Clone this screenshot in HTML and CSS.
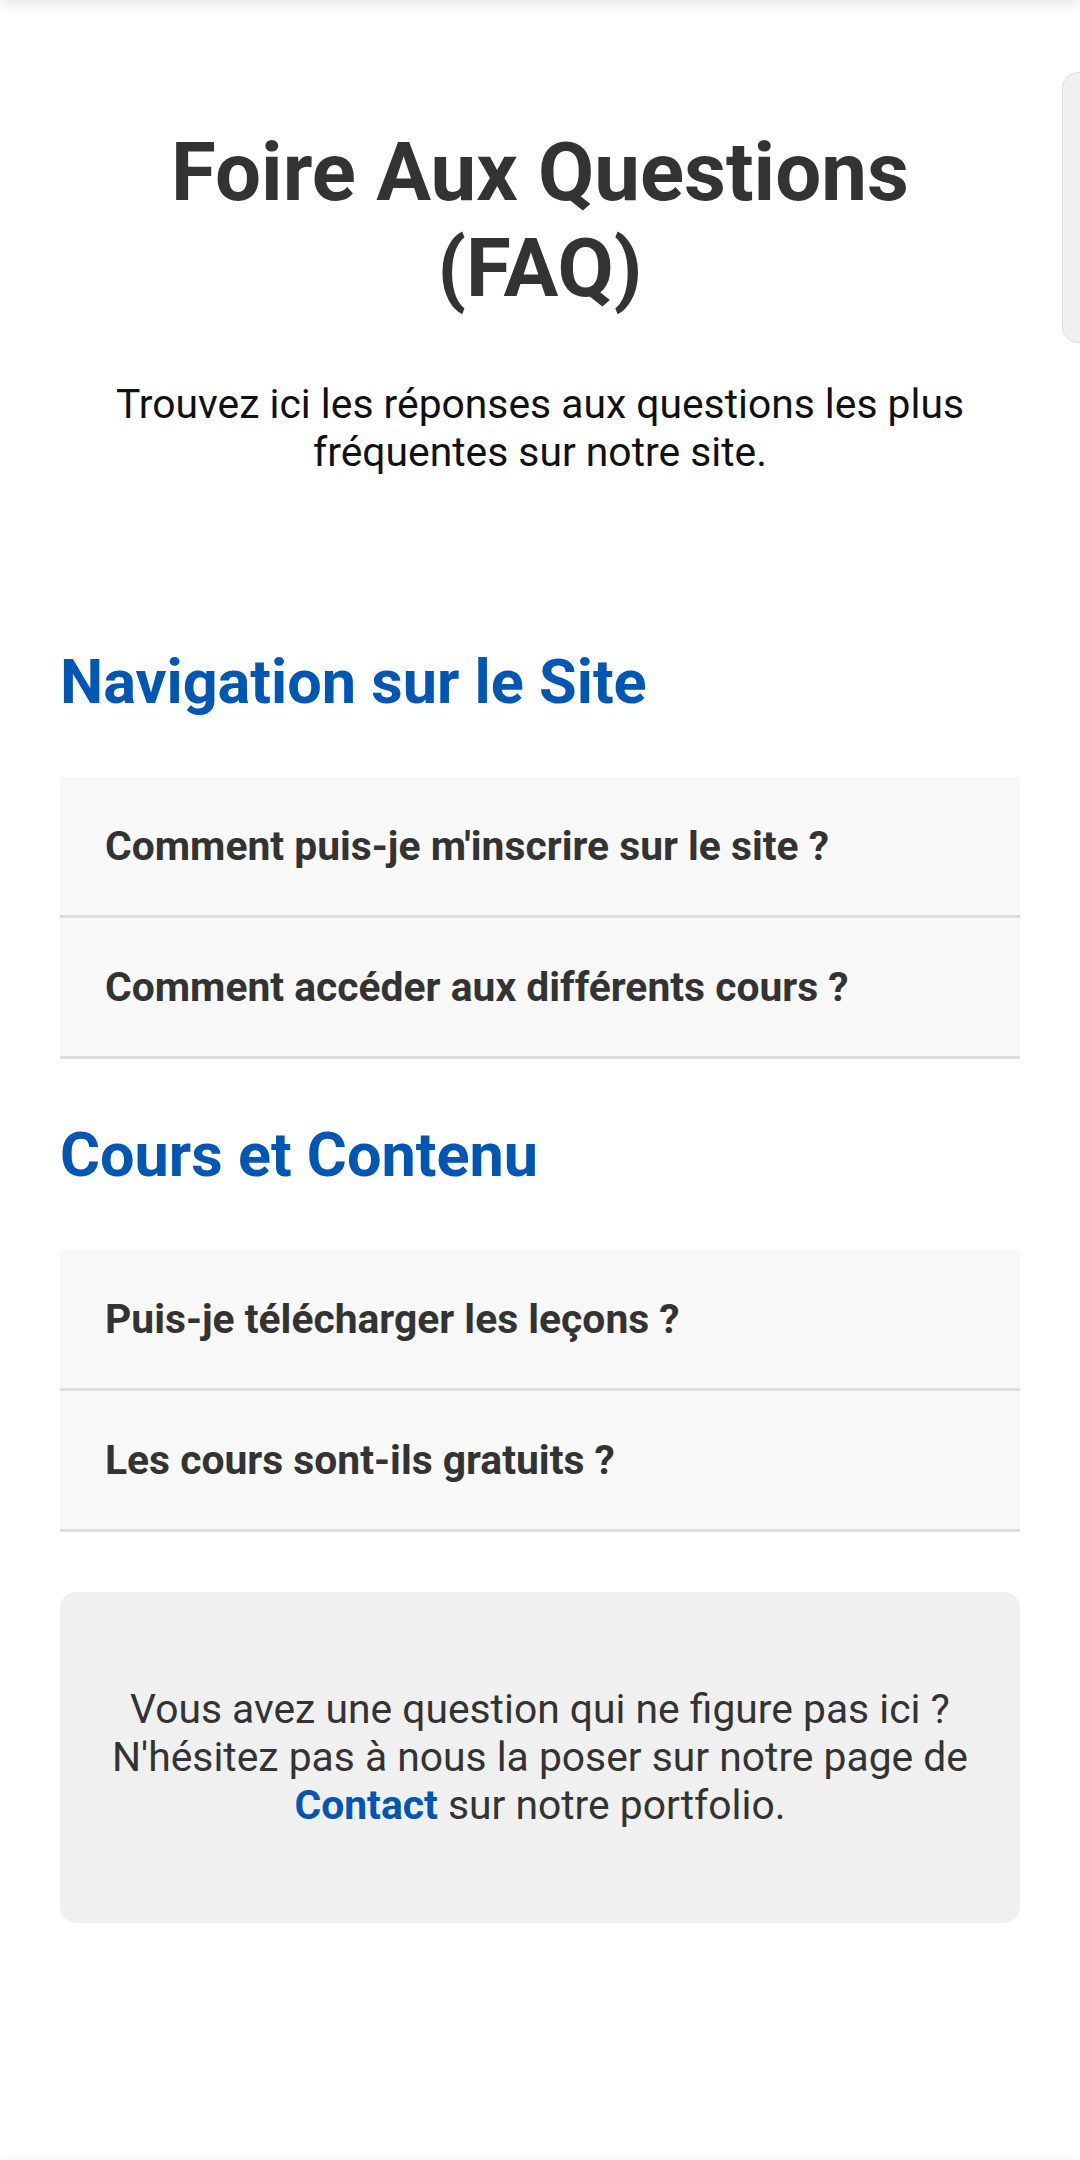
FILE: index.html
```html
<!DOCTYPE html>
<html lang="fr">
<head>
<meta charset="utf-8">
<title>FAQ</title>
<link rel="stylesheet" href="styles.css">
</head>
<body>
<div class="top-shade"></div>
<div class="side-tab"></div>
<main class="page">
  <header class="intro">
    <h1 class="intro-title">Foire Aux Questions (FAQ)</h1>
    <p class="intro-text">Trouvez ici les réponses aux questions les plus fréquentes sur notre site.</p>
  </header>

  <section class="faq-section first">
    <h2 class="section-title">Navigation sur le Site</h2>
    <div class="faq-list">
      <div class="faq-item">Comment puis-je m'inscrire sur le site ?</div>
      <div class="faq-item">Comment accéder aux différents cours ?</div>
    </div>
  </section>

  <section class="faq-section">
    <h2 class="section-title">Cours et Contenu</h2>
    <div class="faq-list">
      <div class="faq-item">Puis-je télécharger les leçons ?</div>
      <div class="faq-item">Les cours sont-ils gratuits ?</div>
    </div>
  </section>

  <div class="contact-box">
    <p>Vous avez une question qui ne figure pas ici ? N'hésitez pas à nous la poser sur notre page de <a href="#" class="contact-link">Contact</a> sur notre portfolio.</p>
  </div>
</main>
<div class="bottom-shade"></div>
</body>
</html>
```

FILE: styles.css
```css
html, body {
  margin: 0;
  padding: 0;
  background: #ffffff;
}

body {
  font-family: Roboto, "Liberation Sans", Arial, sans-serif;
  color: #333333;
}

.top-shade {
  position: fixed;
  top: -40px;
  left: 0;
  right: 0;
  height: 40px;
  box-shadow: 0 2px 16px rgba(0, 0, 0, 0.14);
  background: #ffffff;
}

.bottom-shade {
  position: fixed;
  bottom: -40px;
  left: 0;
  right: 0;
  height: 40px;
  box-shadow: 0 -1px 8px rgba(0, 0, 0, 0.06);
  background: #ffffff;
}

.side-tab {
  position: fixed;
  top: 72px;
  right: -20px;
  width: 36px;
  height: 269px;
  background: #f0f0f0;
  border: 1px solid #dddddd;
  border-radius: 16px 0 0 16px;
}

.page {
  padding: 0 60px;
}

.intro {
  padding: 124px 24px 0;
  text-align: center;
}

.intro-title {
  margin: 0 0 64px;
  font-size: 81.6px;
  line-height: normal;
  font-weight: 700;
  color: #333333;
}

.intro-text {
  margin: 0;
  font-size: 40.8px;
  line-height: normal;
  color: #111111;
}

.faq-section {
  margin-top: 60px;
}

.faq-section.first {
  margin-top: 170px;
}

.section-title {
  margin: 0 0 59px;
  font-size: 61.2px;
  line-height: normal;
  font-weight: 700;
  color: #0056b3;
}

.faq-item {
  background: #f8f8f8;
  border-bottom: 3px solid #dddddd;
  padding: 45px;
  font-size: 40.8px;
  line-height: normal;
  font-weight: 700;
  color: #333333;
}

.contact-box {
  margin-top: 60px;
  background: #f0f0f0;
  border-radius: 16px;
  padding: 93px 40px 94px;
  text-align: center;
}

.contact-box p {
  margin: 0;
  font-size: 40.8px;
  line-height: normal;
  color: #333333;
}

.contact-link {
  color: #0056b3;
  font-weight: 700;
  text-decoration: none;
}
```
